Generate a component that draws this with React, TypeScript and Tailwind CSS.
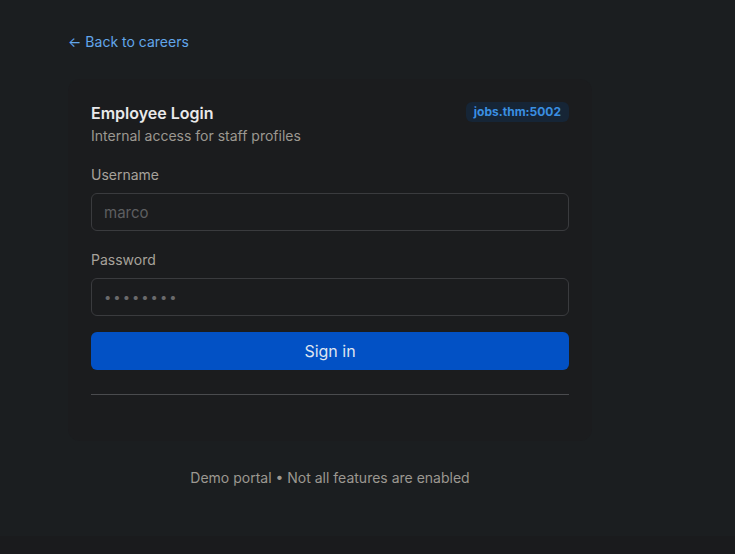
import React from 'react';

export default function App() {
  return (
    <div className="bg-[#1a1b1d] h-[554px]" style={{ fontFamily: 'Inter, "Noto Sans", sans-serif' }}>
      <div className="h-[536px] bg-[#1b1e20] pt-[32px]">
        <div className="ml-[68px] w-[524px]">
          {/* Back link */}
          <a href="#" className="flex items-center gap-1 text-sm leading-5 text-[#62a6ea] mb-[27px] w-fit">
            <span>←</span>
            <span>Back to careers</span>
          </a>

          {/* Card */}
          <div className="bg-[#1b1c1e] rounded-xl px-[23px] pt-[22px] pb-[46px]">
            <div className="flex items-start justify-between">
              <div>
                <h1 className="text-base leading-6 font-semibold text-[#e9e9ea]">Employee Login</h1>
                <p className="mt-px text-sm leading-5 text-[#9c9891]">Internal access for staff profiles</p>
              </div>
              <span className="mt-[1px] px-2 py-[2px] rounded-md bg-[#162536] text-xs leading-4 font-bold text-[#3a8fe2]">
                jobs.thm:5002
              </span>
            </div>

            <label className="block mt-[19px] text-sm leading-5 text-[#a7a29b]">Username</label>
            <input
              className="mt-2 w-full h-[38px] rounded-md border border-[#3a3b3e] bg-transparent px-3 text-[15px] text-[#d0d0d0] placeholder:text-[#5e5f61] outline-none"
              placeholder="marco"
            />

            <label className="block mt-[19px] text-sm leading-5 text-[#a7a29b]">Password</label>
            <input
              type="password"
              readOnly
              defaultValue="password"
              className="mt-2 w-full h-[38px] rounded-md border border-[#3a3b3e] bg-transparent px-3 text-[13px] tracking-[2px] text-[#6a6a6c] outline-none"
            />

            <button className="mt-4 w-full h-[38px] rounded-md bg-[#0251c5] text-base text-[#dfe5f0]">
              Sign in
            </button>

            <div className="mt-6 h-px bg-[#4a4b4e]" />
          </div>

          <p className="mt-[27px] text-center text-sm leading-5 text-[#9c9891]">
            Demo portal • Not all features are enabled
          </p>
        </div>
      </div>
    </div>
  );
}
